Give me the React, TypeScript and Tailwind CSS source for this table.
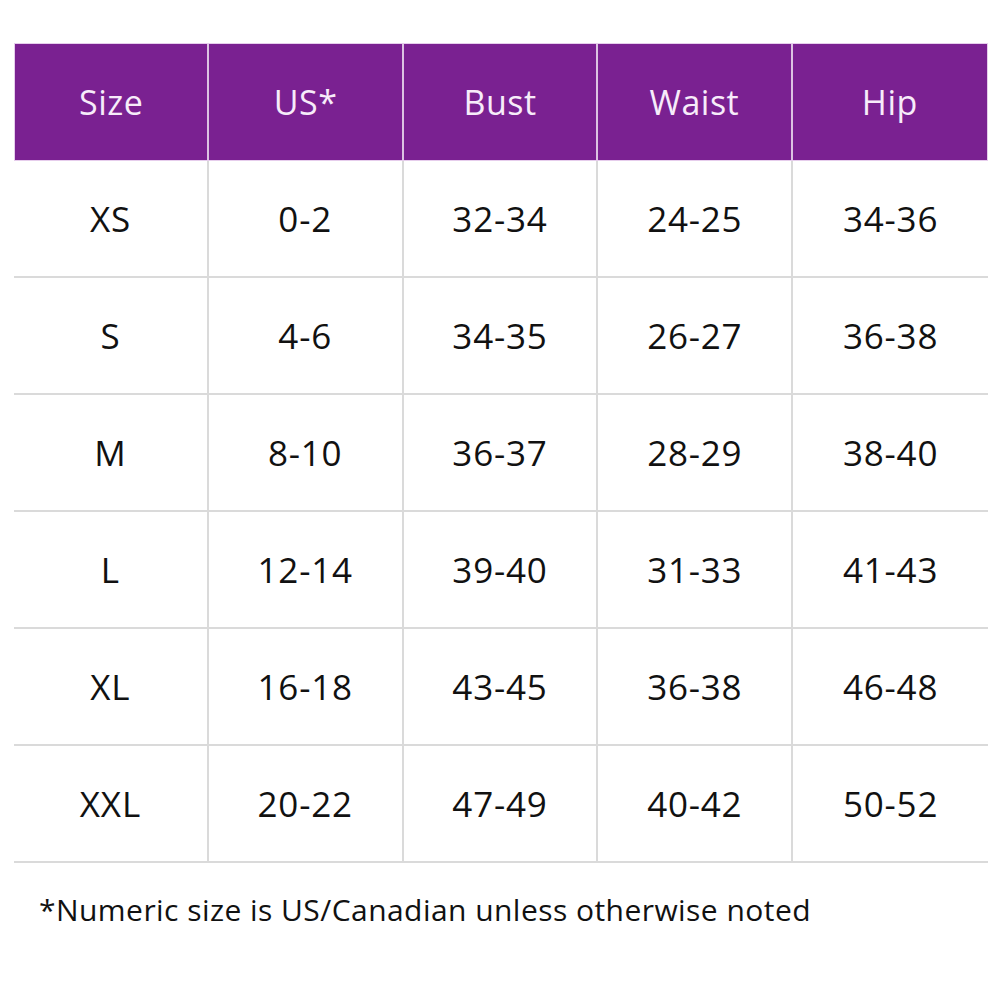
import React from 'react';

const headers = ['Size', 'US*', 'Bust', 'Waist', 'Hip'];

const rows: string[][] = [
    ['XS', '0-2', '32-34', '24-25', '34-36'],
    ['S', '4-6', '34-35', '26-27', '36-38'],
    ['M', '8-10', '36-37', '28-29', '38-40'],
    ['L', '12-14', '39-40', '31-33', '41-43'],
    ['XL', '16-18', '43-45', '36-38', '46-48'],
    ['XXL', '20-22', '47-49', '40-42', '50-52'],
];

const App: React.FC = () => {
    return (
        <div className="w-[1000px] h-[1000px] bg-white pt-[43px] px-[14px] font-['Open_Sans',sans-serif]">
            <div className="w-[974px]">
                <div className="grid grid-cols-5 h-[118px] bg-[#7a2191] border border-[#e6cdec]">
                    {headers.map((h, i) => (
                        <div
                            key={h}
                            className={`flex items-center justify-center text-[34px] tracking-[0.5px] text-[#f7ecfa] ${
                                i < headers.length - 1 ? 'border-r-2 border-[#dcc3e2]' : ''
                            }`}
                        >
                            {h}
                        </div>
                    ))}
                </div>
                {rows.map((row, r) => (
                    <div key={r} className="grid grid-cols-5 h-[117px] border-b-2 border-[#dadada]">
                        {row.map((cell, i) => (
                            <div
                                key={i}
                                className={`flex items-center justify-center pt-[2px] text-[35px] tracking-[0.8px] text-[#111] ${
                                    i < row.length - 1 ? 'border-r-2 border-[#dadada]' : ''
                                }`}
                            >
                                {cell}
                            </div>
                        ))}
                    </div>
                ))}
                <p className="mt-[24px] ml-[25px] text-[30px] tracking-[0.45px] text-[#111]">
                    *Numeric size is US/Canadian unless otherwise noted
                </p>
            </div>
        </div>
    );
};

export default App;
